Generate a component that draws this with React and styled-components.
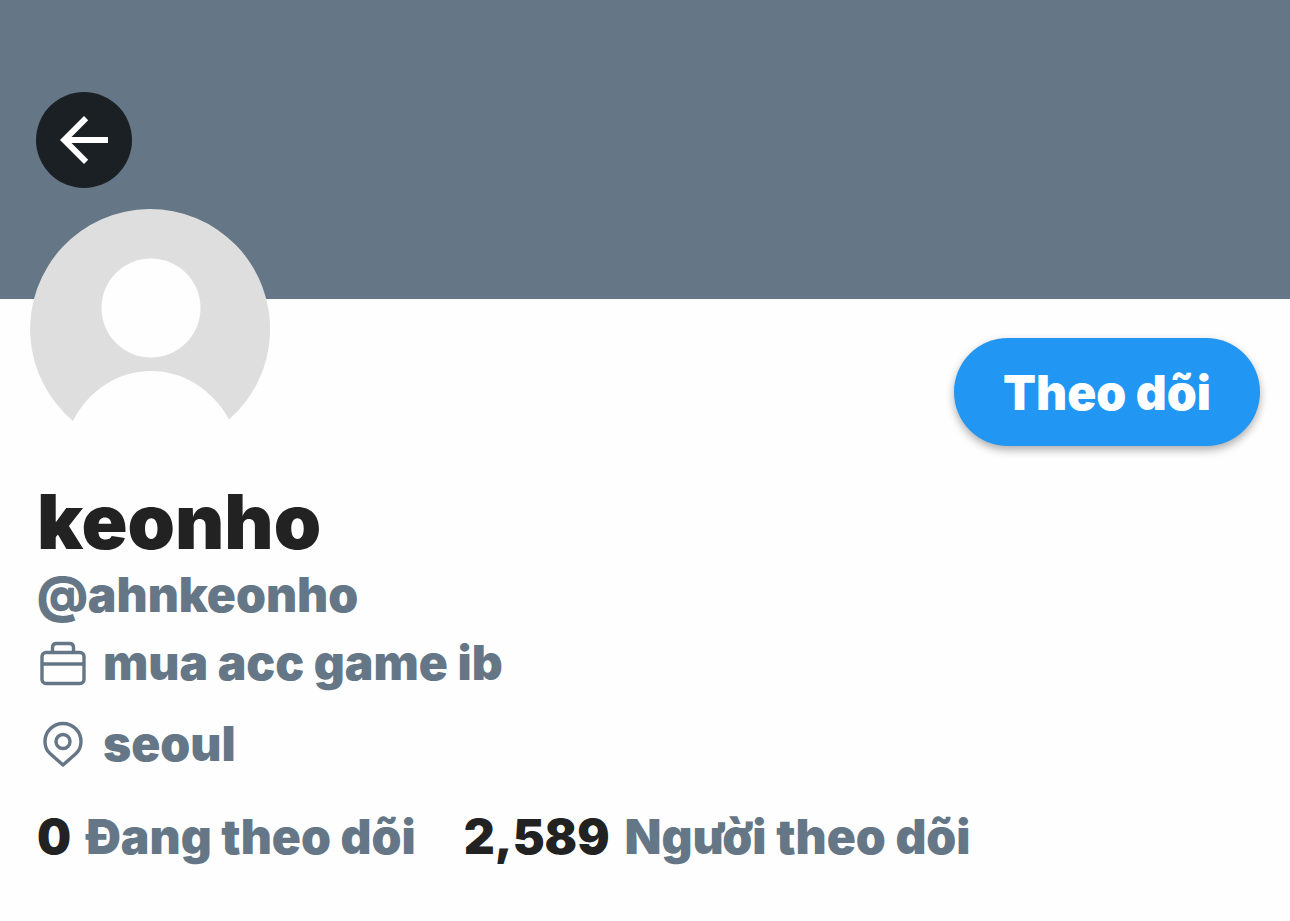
import styled, { createGlobalStyle } from 'styled-components';

const GlobalStyle = createGlobalStyle`
    * {
        box-sizing: border-box;
    }

    body {
        margin: 0;
        background: #fefefe;
        color: #222222;
        font-family: Inter, 'Noto Sans', sans-serif;
    }
`

const Banner = styled.header`
    height: 299px;
    padding: 92px 36px 0;
    background: #657786;
`

const BackButton = styled.button`
    display: flex;
    align-items: center;
    justify-content: center;
    width: 96px;
    height: 96px;
    padding: 0;
    border: none;
    border-radius: 50%;
    background: #1b2024;
    cursor: pointer;
`

const Profile = styled.main`
    padding: 0 30px;
`

const TopRow = styled.div`
    display: flex;
    align-items: flex-end;
    justify-content: space-between;
    margin-top: -90px;
`

const Avatar = styled.svg`
    display: block;
    width: 240px;
    height: 237px;
`

const FollowButton = styled.button`
    min-width: 306px;
    height: 108px;
    padding: 0 48px;
    border: none;
    border-radius: 54px;
    background: #2196f3;
    box-shadow: 0 4px 8px rgba(0, 0, 0, 0.32);
    color: #ffffff;
    font-family: inherit;
    font-size: 48px;
    font-weight: 900;
    cursor: pointer;
`

const Info = styled.section`
    display: flex;
    flex-direction: column;
    padding: 30px 7px;
`

const Name = styled.h1`
    margin: 0;
    font-size: 76px;
    font-weight: 900;
    line-height: 90px;
`

const Handle = styled.p`
    margin: 0;
    color: #657786;
    font-size: 48px;
    font-weight: 900;
    line-height: 58px;
`

const Detail = styled.div`
    display: flex;
    align-items: center;
    gap: 15px;
    margin-top: ${props => props.$gap}px;
    color: #657786;
    font-size: 48px;
    font-weight: 900;
    line-height: 60px;

    svg {
        flex: none;
    }
`

const Stats = styled.div`
    display: flex;
    flex-wrap: wrap;
    gap: 48px;
    margin-top: 33px;
`

const StatLink = styled.a`
    display: flex;
    gap: 15px;
    color: #657786;
    font-size: 48px;
    font-weight: 900;
    line-height: 60px;
    text-decoration: none;
`

const Count = styled.span`
    color: #222222;
`

const BackIcon = () => (
    <svg width="48" height="48" viewBox="0 0 48 48" fill="#ffffff" aria-hidden="true">
        <path d="M48.5 21H11.5L28.2 4.2L24 0L0 24L24 48L28.2 43.8L11.5 27H48.5Z" />
    </svg>
)

const BriefcaseIcon = () => (
    <svg width="51" height="50" viewBox="0 0 51 50" fill="none" stroke="#657786" strokeWidth="3.4" aria-hidden="true">
        <rect x="5" y="14.5" width="42" height="31" rx="4" />
        <path d="M5 26H47M15.5 14V9.5Q15.5 5.5 19.5 5.5H32.5Q36.5 5.5 36.5 9.5V14" />
    </svg>
)

const LocationIcon = () => (
    <svg width="51" height="50" viewBox="0 0 51 50" fill="none" stroke="#657786" strokeWidth="3.4" aria-hidden="true">
        <path d="M26 46L13 34.5Q8 30 8 22.5A18 18 0 0 1 44 22.5Q44 30 39 34.5Z" strokeLinejoin="round" />
        <circle cx="26" cy="22.5" r="7" />
    </svg>
)

export default function App() {
    return (
        <>
            <GlobalStyle />
            <Banner>
                <BackButton aria-label="Quay lại">
                    <BackIcon />
                </BackButton>
            </Banner>
            <Profile>
                <TopRow>
                    <Avatar viewBox="0 0 240 237" aria-hidden="true">
                        <path d="M43 212A120 120 0 1 1 199 210.5C183 181 154 162 121 162S59 181 43 212Z" fill="#dedede" />
                        <circle cx="121" cy="99" r="49.5" fill="#fefefe" />
                    </Avatar>
                    <FollowButton>Theo dõi</FollowButton>
                </TopRow>
                <Info>
                    <Name>keonho</Name>
                    <Handle>@ahnkeonho</Handle>
                    <Detail $gap={9}>
                        <BriefcaseIcon />
                        <span>mua acc game ib</span>
                    </Detail>
                    <Detail $gap={21}>
                        <LocationIcon />
                        <span>seoul</span>
                    </Detail>
                    <Stats>
                        <StatLink href="#following"><Count>0</Count> Đang theo dõi</StatLink>
                        <StatLink href="#followers"><Count>2,589</Count> Người theo dõi</StatLink>
                    </Stats>
                </Info>
            </Profile>
        </>
    )
}
